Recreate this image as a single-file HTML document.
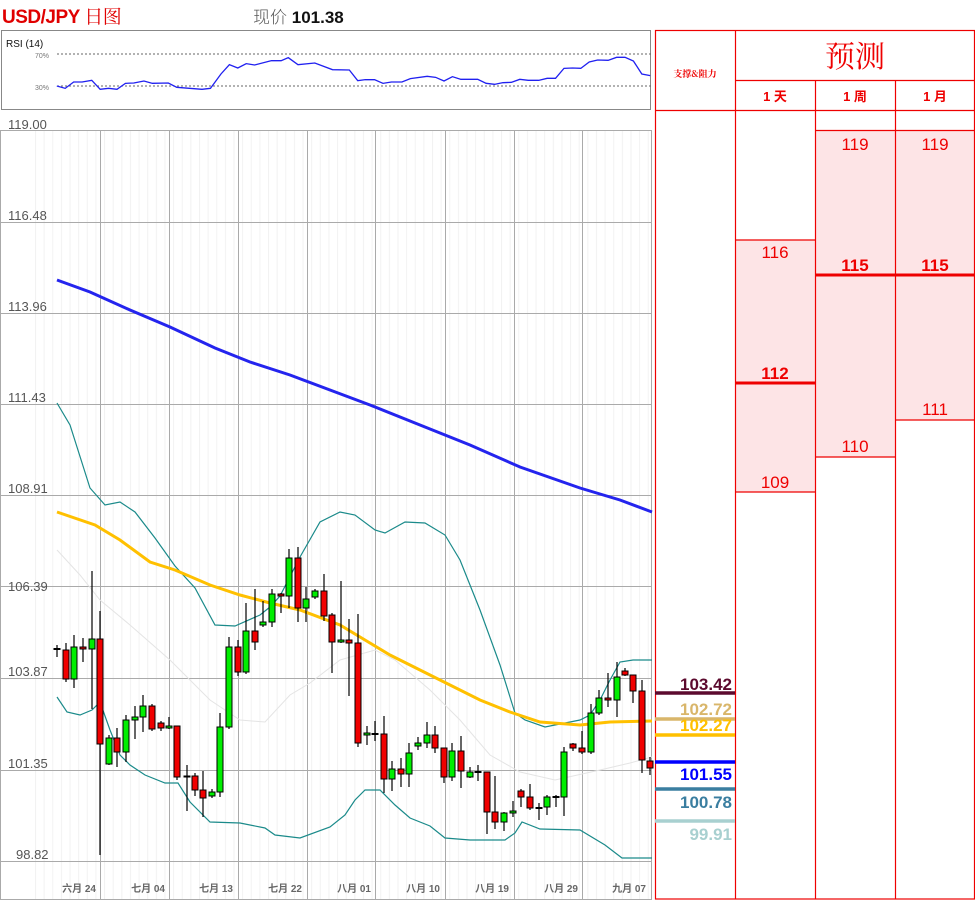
<!DOCTYPE html>
<html><head><meta charset="utf-8"><style>
body{margin:0;width:975px;height:900px;background:#fff;overflow:hidden;position:relative;font-family:"Liberation Sans","Noto Sans CJK SC",sans-serif}
.a{position:absolute;white-space:nowrap}
</style></head><body>
<div class="a" style="left:2px;top:2px;font-size:19px;color:#e00000;font-weight:bold;letter-spacing:-0.5px">USD/JPY <span style="font-weight:normal;font-family:'Noto Serif CJK SC',serif">日图</span></div>
<div class="a" style="left:253px;top:3px;font-size:17px;color:#555"><span style="font-family:'Noto Sans CJK SC',sans-serif;font-weight:300">现价</span> <b style="color:#111">101.38</b></div>

<svg class="a" style="left:0;top:0" width="975" height="900" xmlns="http://www.w3.org/2000/svg">
<defs><pattern id="mg" x="0.5" y="0" width="8.63" height="10" patternUnits="userSpaceOnUse"><line x1="0.5" y1="0" x2="0.5" y2="10" stroke="#f2f2f2" stroke-width="1"/></pattern></defs>
<!-- RSI panel -->
<rect x="1.5" y="30.5" width="649" height="79" fill="#fff" stroke="#888" stroke-width="1"/>
<text x="6" y="47" font-size="10" fill="#111" font-family="Liberation Sans">RSI (14)</text>
<text x="35" y="58" font-size="7" fill="#777" font-family="Liberation Sans">70%</text>
<text x="35" y="90" font-size="7" fill="#777" font-family="Liberation Sans">30%</text>
<line x1="57" y1="54" x2="651" y2="54" stroke="#666" stroke-dasharray="2,2"/>
<line x1="57" y1="86" x2="651" y2="86" stroke="#666" stroke-dasharray="2,2"/>
<g transform="scale(0.42087,0.33333)">
<polyline fill="none" stroke="#2020f0" stroke-width="1.3" vector-effect="non-scaling-stroke" points="135,258 155,265 175,246 195,246 218,241 238,268 258,265 278,268 298,250 318,249 342,243 362,250 400,249 420,262 450,265 480,268 500,265 525,222 545,194 565,204 585,191 605,195 645,182 668,182 685,173 708,194 748,189 790,209 830,210 850,242 868,239 890,239 910,250 930,246 955,246 975,236 1015,229 1035,232 1055,243 1075,230 1095,238 1135,238 1155,250 1175,253 1195,248 1215,247 1235,238 1255,241 1280,241 1300,235 1320,235 1340,205 1360,204 1380,205 1400,186 1420,180 1445,181 1465,172 1485,172 1505,183 1525,222 1545,227"/>
</g>

<!-- main chart grid -->
<rect x="30" y="131" width="621" height="768" fill="url(#mg)"/>
<g stroke="#aaa" stroke-width="1">
<line x1="0" y1="130.5" x2="652" y2="130.5"/>
<line x1="0" y1="222.5" x2="652" y2="222.5"/>
<line x1="0" y1="313.5" x2="652" y2="313.5"/>
<line x1="0" y1="404.5" x2="652" y2="404.5"/>
<line x1="0" y1="495.5" x2="652" y2="495.5"/>
<line x1="0" y1="586.5" x2="652" y2="586.5"/>
<line x1="0" y1="678.5" x2="652" y2="678.5"/>
<line x1="0" y1="770.5" x2="652" y2="770.5"/>
<line x1="0" y1="861.5" x2="652" y2="861.5"/>
<line x1="0" y1="899.5" x2="652" y2="899.5"/>
<line x1="0.5" y1="130" x2="0.5" y2="900"/>
<line x1="100.5" y1="130" x2="100.5" y2="900"/>
<line x1="169.5" y1="130" x2="169.5" y2="900"/>
<line x1="238.5" y1="130" x2="238.5" y2="900"/>
<line x1="307.5" y1="130" x2="307.5" y2="900"/>
<line x1="375.5" y1="130" x2="375.5" y2="900"/>
<line x1="445.5" y1="130" x2="445.5" y2="900"/>
<line x1="514.5" y1="130" x2="514.5" y2="900"/>
<line x1="582.5" y1="130" x2="582.5" y2="900"/>
<line x1="651.5" y1="130" x2="651.5" y2="900"/>
</g>
<g font-size="13" fill="#555" font-family="Liberation Sans">
<text x="8" y="129">119.00</text><text x="8" y="220">116.48</text><text x="8" y="311">113.96</text><text x="8" y="402">111.43</text><text x="8" y="493">108.91</text><text x="8" y="591">106.39</text><text x="8" y="676">103.87</text><text x="8" y="768">101.35</text><text x="16" y="859">98.82</text>
</g>
<g font-size="10" fill="#666" font-weight="bold" font-family="Liberation Sans,Noto Sans CJK SC,sans-serif" text-anchor="end">
<text x="96" y="892">六月 24</text><text x="165" y="892">七月 04</text><text x="233" y="892">七月 13</text><text x="302" y="892">七月 22</text><text x="371" y="892">八月 01</text><text x="440" y="892">八月 10</text><text x="509" y="892">八月 19</text><text x="578" y="892">八月 29</text><text x="646" y="892">九月 07</text>
</g>

<!-- indicators -->
<polyline fill="none" stroke="#e4e4e4" stroke-width="1" points="57,550 80,575 100,600 130,625 170,660 210,700 240,720 265,722 290,695 310,683 340,660 375,650 395,660 430,690 460,720 490,755 520,772 555,780 600,770 630,763 652,757"/>
<polyline fill="none" stroke="#1a8a8a" stroke-width="1.2" points="57,403 70,425 90,488 105,505 120,502 135,512 155,538 175,566 195,588 215,625 235,626 260,615 270,607 280,596 300,557 320,522 340,512 355,515 375,530 385,533 405,522 425,523 445,535 460,560 480,610 500,665 515,713 525,720 545,727 560,724 580,720 590,715 600,700 610,680 620,662 633,660 652,660"/>
<polyline fill="none" stroke="#1a8a8a" stroke-width="1.2" points="57,697 67,712 80,715 92,710 100,702 110,730 120,755 130,765 145,775 165,783 178,783 190,802 210,822 240,823 265,828 275,835 300,838 330,827 345,815 355,800 365,790 380,790 395,805 410,818 430,826 445,838 470,840 505,840 515,833 522,822 540,829 580,830 605,845 622,858 652,858"/>
<polyline fill="none" stroke="#2424ee" stroke-width="3" points="57,280 90,292 130,310 170,327 215,348 250,362 290,375 330,390 370,405 420,425 470,445 520,467 580,488 620,500 652,512"/>
<polyline fill="none" stroke="#ffc000" stroke-width="3" points="57,512 95,525 120,540 150,562 175,570 210,585 240,595 270,603 300,610 340,625 365,640 390,655 420,670 450,685 480,700 510,712 540,722 580,725 610,722 652,721"/>

<!-- candles -->
<g stroke="#000" stroke-width="1.2">
<line x1="57" y1="645" x2="57" y2="657"/><line x1="66" y1="643" x2="66" y2="682"/><line x1="74" y1="635" x2="74" y2="688"/><line x1="83" y1="638" x2="83" y2="662"/><line x1="92" y1="571" x2="92" y2="709"/><line x1="100" y1="611" x2="100" y2="855"/><line x1="109" y1="735" x2="109" y2="765"/><line x1="117" y1="728" x2="117" y2="767"/><line x1="126" y1="715" x2="126" y2="762"/><line x1="135" y1="706" x2="135" y2="739"/><line x1="143" y1="695" x2="143" y2="732"/><line x1="152" y1="704" x2="152" y2="731"/><line x1="161" y1="721" x2="161" y2="731"/><line x1="169" y1="717" x2="169" y2="729"/><line x1="177" y1="726" x2="177" y2="780"/><line x1="187" y1="765" x2="187" y2="811"/><line x1="195" y1="773" x2="195" y2="796"/><line x1="203" y1="771" x2="203" y2="817"/><line x1="212" y1="789" x2="212" y2="798"/><line x1="220" y1="713" x2="220" y2="797"/><line x1="229" y1="637" x2="229" y2="729"/><line x1="238" y1="640" x2="238" y2="676"/><line x1="246" y1="603" x2="246" y2="674"/><line x1="255" y1="589" x2="255" y2="650"/><line x1="263" y1="601" x2="263" y2="627"/><line x1="272" y1="589" x2="272" y2="627"/><line x1="281" y1="593" x2="281" y2="613"/><line x1="289" y1="549" x2="289" y2="608"/><line x1="298" y1="547" x2="298" y2="622"/><line x1="306" y1="587" x2="306" y2="622"/><line x1="315" y1="589" x2="315" y2="599"/><line x1="324" y1="574" x2="324" y2="621"/><line x1="332" y1="613" x2="332" y2="673"/><line x1="341" y1="581" x2="341" y2="643"/><line x1="349" y1="619" x2="349" y2="696"/><line x1="358" y1="614" x2="358" y2="747"/><line x1="367" y1="726" x2="367" y2="745"/><line x1="375" y1="721" x2="375" y2="741"/><line x1="384" y1="716" x2="384" y2="793"/><line x1="392" y1="761" x2="392" y2="791"/><line x1="401" y1="758" x2="401" y2="787"/><line x1="409" y1="743" x2="409" y2="787"/><line x1="418" y1="737" x2="418" y2="750"/><line x1="427" y1="722" x2="427" y2="748"/><line x1="435" y1="726" x2="435" y2="753"/><line x1="444" y1="748" x2="444" y2="783"/><line x1="452" y1="743" x2="452" y2="781"/><line x1="461" y1="736" x2="461" y2="788"/><line x1="470" y1="767" x2="470" y2="778"/><line x1="478" y1="765" x2="478" y2="781"/><line x1="487" y1="772" x2="487" y2="834"/><line x1="495" y1="776" x2="495" y2="829"/><line x1="504" y1="812" x2="504" y2="831"/><line x1="513" y1="801" x2="513" y2="817"/><line x1="521" y1="789" x2="521" y2="807"/><line x1="530" y1="784" x2="530" y2="810"/><line x1="539" y1="803" x2="539" y2="820"/><line x1="547" y1="795" x2="547" y2="815"/><line x1="556" y1="795" x2="556" y2="807"/><line x1="564" y1="747" x2="564" y2="816"/><line x1="573" y1="743" x2="573" y2="751"/><line x1="582" y1="731" x2="582" y2="754"/><line x1="591" y1="704" x2="591" y2="754"/><line x1="599" y1="690" x2="599" y2="715"/><line x1="608" y1="673" x2="608" y2="707"/><line x1="617" y1="662" x2="617" y2="717"/><line x1="625" y1="668" x2="625" y2="676"/><line x1="633" y1="675" x2="633" y2="703"/><line x1="642" y1="680" x2="642" y2="773"/><line x1="650" y1="757" x2="650" y2="775"/>
</g>
<g stroke="#000" stroke-width="1">
<rect x="54" y="648.5" width="6" height="1" fill="#000"/>
<rect x="63" y="650" width="6" height="29" fill="#f00000"/>
<rect x="71" y="647" width="6" height="32" fill="#00ee00"/>
<rect x="80" y="647" width="6" height="2" fill="#f00000"/>
<rect x="89" y="639" width="6" height="10" fill="#00ee00"/>
<rect x="97" y="639" width="6" height="105" fill="#f00000"/>
<rect x="106" y="738" width="6" height="26" fill="#00ee00"/>
<rect x="114" y="738" width="6" height="14" fill="#f00000"/>
<rect x="123" y="720" width="6" height="32" fill="#00ee00"/>
<rect x="132" y="717" width="6" height="3" fill="#00ee00"/>
<rect x="140" y="706" width="6" height="11" fill="#00ee00"/>
<rect x="149" y="706" width="6" height="23" fill="#f00000"/>
<rect x="158" y="723" width="6" height="5" fill="#f00000"/>
<rect x="166" y="726" width="6" height="2" fill="#00ee00"/>
<rect x="174" y="726" width="6" height="51" fill="#f00000"/>
<rect x="184" y="776" width="6" height="1" fill="#000"/>
<rect x="192" y="776" width="6" height="14" fill="#f00000"/>
<rect x="200" y="790" width="6" height="8" fill="#f00000"/>
<rect x="209" y="792" width="6" height="4" fill="#00ee00"/>
<rect x="217" y="727" width="6" height="65" fill="#00ee00"/>
<rect x="226" y="647" width="6" height="80" fill="#00ee00"/>
<rect x="235" y="647" width="6" height="25" fill="#f00000"/>
<rect x="243" y="631" width="6" height="41" fill="#00ee00"/>
<rect x="252" y="631" width="6" height="11" fill="#f00000"/>
<rect x="260" y="622" width="6" height="3" fill="#00ee00"/>
<rect x="269" y="594" width="6" height="28" fill="#00ee00"/>
<rect x="278" y="594" width="6" height="2" fill="#f00000"/>
<rect x="286" y="558" width="6" height="38" fill="#00ee00"/>
<rect x="295" y="558" width="6" height="50" fill="#f00000"/>
<rect x="303" y="599" width="6" height="9" fill="#00ee00"/>
<rect x="312" y="591" width="6" height="6" fill="#00ee00"/>
<rect x="321" y="591" width="6" height="25" fill="#f00000"/>
<rect x="329" y="615" width="6" height="27" fill="#f00000"/>
<rect x="338" y="640" width="6" height="2" fill="#00ee00"/>
<rect x="346" y="640" width="6" height="3" fill="#f00000"/>
<rect x="355" y="643" width="6" height="100" fill="#f00000"/>
<rect x="364" y="733" width="6" height="2" fill="#00ee00"/>
<rect x="372" y="733.5" width="6" height="1" fill="#000"/>
<rect x="381" y="734" width="6" height="45" fill="#f00000"/>
<rect x="389" y="769" width="6" height="10" fill="#00ee00"/>
<rect x="398" y="769" width="6" height="5" fill="#f00000"/>
<rect x="406" y="753" width="6" height="21" fill="#00ee00"/>
<rect x="415" y="743" width="6" height="3" fill="#00ee00"/>
<rect x="424" y="735" width="6" height="8" fill="#00ee00"/>
<rect x="432" y="735" width="6" height="13" fill="#f00000"/>
<rect x="441" y="748" width="6" height="29" fill="#f00000"/>
<rect x="449" y="751" width="6" height="26" fill="#00ee00"/>
<rect x="458" y="751" width="6" height="20" fill="#f00000"/>
<rect x="467" y="772" width="6" height="5" fill="#00ee00"/>
<rect x="475" y="771.5" width="6" height="1" fill="#000"/>
<rect x="484" y="772" width="6" height="40" fill="#f00000"/>
<rect x="492" y="812" width="6" height="10" fill="#f00000"/>
<rect x="501" y="813" width="6" height="9" fill="#00ee00"/>
<rect x="510" y="811" width="6" height="2" fill="#00ee00"/>
<rect x="518" y="791" width="6" height="6" fill="#f00000"/>
<rect x="527" y="797" width="6" height="11" fill="#f00000"/>
<rect x="536" y="807.5" width="6" height="1" fill="#000"/>
<rect x="544" y="797" width="6" height="10" fill="#00ee00"/>
<rect x="553" y="796.5" width="6" height="1" fill="#000"/>
<rect x="561" y="752" width="6" height="45" fill="#00ee00"/>
<rect x="570" y="744" width="6" height="4" fill="#f00000"/>
<rect x="579" y="748" width="6" height="4" fill="#f00000"/>
<rect x="588" y="713" width="6" height="39" fill="#00ee00"/>
<rect x="596" y="698" width="6" height="15" fill="#00ee00"/>
<rect x="605" y="698" width="6" height="2" fill="#f00000"/>
<rect x="614" y="677" width="6" height="23" fill="#00ee00"/>
<rect x="622" y="671" width="6" height="4" fill="#f00000"/>
<rect x="630" y="675" width="6" height="16" fill="#f00000"/>
<rect x="639" y="691" width="6" height="69" fill="#f00000"/>
<rect x="647" y="761" width="6" height="7" fill="#f00000"/>
</g>

<!-- right table -->
<rect x="816" y="130" width="79" height="327" fill="#fde4e6"/>
<rect x="896" y="130" width="78" height="290" fill="#fde4e6"/>
<rect x="736" y="240" width="79" height="252" fill="#fde4e6"/>
<g stroke="#ee0000" stroke-width="1.2" fill="none">
<rect x="655.5" y="30.5" width="319" height="868.5"/>
<line x1="735.5" y1="30" x2="735.5" y2="899"/>
<line x1="735" y1="80.5" x2="975" y2="80.5"/>
<line x1="655" y1="110.5" x2="975" y2="110.5"/>
<line x1="815.5" y1="80" x2="815.5" y2="899"/>
<line x1="895.5" y1="80" x2="895.5" y2="899"/>
<line x1="815" y1="130.5" x2="975" y2="130.5"/>
<line x1="735" y1="240" x2="815" y2="240"/>
<line x1="735" y1="492" x2="815" y2="492"/>
<line x1="815" y1="457" x2="895" y2="457"/>
<line x1="895" y1="420" x2="975" y2="420"/>
</g>
<g stroke="#ee0000" stroke-width="3">
<line x1="735" y1="383" x2="815" y2="383"/>
<line x1="815" y1="275" x2="975" y2="275"/>
</g>
<g fill="#ee0000" font-family="Liberation Sans,Noto Sans CJK SC,sans-serif" text-anchor="middle">
<text x="695" y="77" font-size="9" font-family="Noto Serif CJK SC,serif" font-weight="bold">支撑&amp;阻力</text>
<text x="855" y="67" font-size="30" font-family="Noto Serif CJK SC,serif">预测</text>
<text x="775" y="101" font-size="13" font-weight="bold">1 天</text>
<text x="855" y="101" font-size="13" font-weight="bold">1 周</text>
<text x="935" y="101" font-size="13" font-weight="bold">1 月</text>
<text x="855" y="150" font-size="17">119</text>
<text x="935" y="150" font-size="17">119</text>
<text x="775" y="258" font-size="17">116</text>
<text x="855" y="271" font-size="17" font-weight="bold">115</text>
<text x="935" y="271" font-size="17" font-weight="bold">115</text>
<text x="775" y="379" font-size="17" font-weight="bold">112</text>
<text x="935" y="415" font-size="17">111</text>
<text x="855" y="452" font-size="17">110</text>
<text x="775" y="488" font-size="17">109</text>
</g>
<!-- support levels -->
<g stroke-width="3.5">
<line x1="655" y1="693" x2="735" y2="693" stroke="#5c0a2e"/>
<line x1="655" y1="719" x2="735" y2="719" stroke="#d9b66a"/>
<line x1="655" y1="735" x2="735" y2="735" stroke="#ffc000"/>
<line x1="655" y1="762" x2="735" y2="762" stroke="#0000ff"/>
<line x1="655" y1="789" x2="735" y2="789" stroke="#3a7ea0"/>
<line x1="655" y1="821" x2="735" y2="821" stroke="#a8d0d0"/>
</g>
<g font-size="17" font-weight="bold" font-family="Liberation Sans" text-anchor="end">
<text x="732" y="690" fill="#5c0a2e">103.42</text>
<text x="732" y="715" fill="#d9b66a">102.72</text>
<text x="732" y="731" fill="#ffc000">102.27</text>
<text x="732" y="780" fill="#0000ff">101.55</text>
<text x="732" y="808" fill="#3a7ea0">100.78</text>
<text x="732" y="840" fill="#a8d0d0">99.91</text>
</g>
</svg>
</body></html>
